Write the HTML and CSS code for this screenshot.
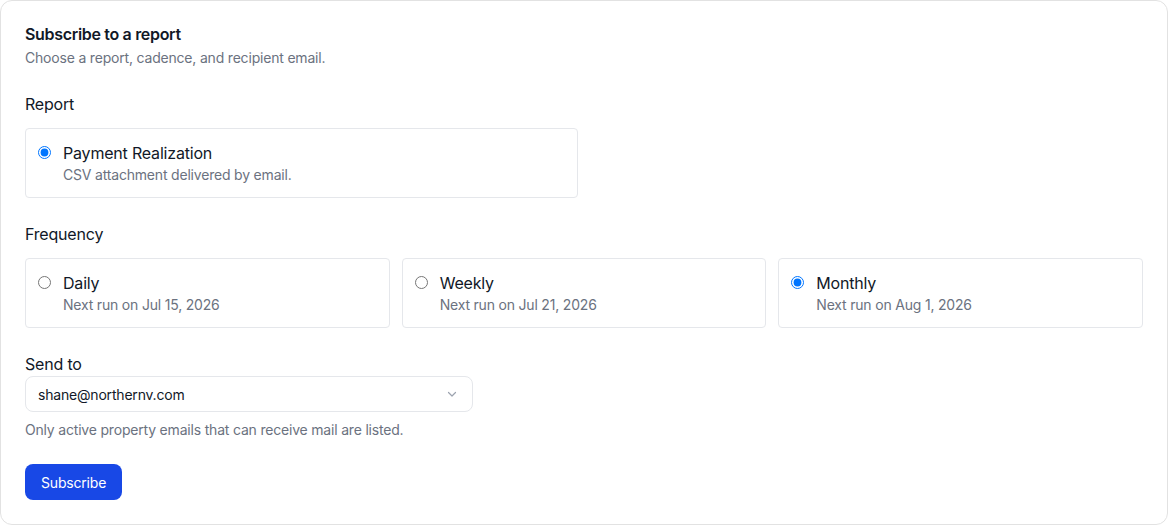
FILE: index.html
```html
<!DOCTYPE html>
<html lang="en">
<head>
  <meta charset="UTF-8">
  <meta name="viewport" content="width=device-width, initial-scale=1.0">
  <title>Subscribe to a report</title>
  <link rel="stylesheet" href="styles.css">
</head>
<body>
  <form class="panel">
    <div class="head">
      <h1>Subscribe to a report</h1>
      <p class="muted">Choose a report, cadence, and recipient email.</p>
    </div>

    <div class="field">
      <div class="label">Report</div>
      <div class="report-list">
        <label class="option">
          <input type="radio" name="report" checked>
          <span class="option-text">
            <span class="option-title">Payment Realization</span>
            <span class="option-sub">CSV attachment delivered by email.</span>
          </span>
        </label>
      </div>
    </div>

    <div class="field">
      <div class="label">Frequency</div>
      <div class="freq-grid">
        <label class="option">
          <input type="radio" name="freq">
          <span class="option-text">
            <span class="option-title">Daily</span>
            <span class="option-sub">Next run on Jul 15, 2026</span>
          </span>
        </label>
        <label class="option">
          <input type="radio" name="freq">
          <span class="option-text">
            <span class="option-title">Weekly</span>
            <span class="option-sub">Next run on Jul 21, 2026</span>
          </span>
        </label>
        <label class="option">
          <input type="radio" name="freq" checked>
          <span class="option-text">
            <span class="option-title">Monthly</span>
            <span class="option-sub">Next run on Aug 1, 2026</span>
          </span>
        </label>
      </div>
    </div>

    <div class="field tight">
      <div class="label">Send to</div>
      <div class="select">
        <span>shane@northernv.com</span>
        <svg width="12" height="12" viewBox="0 0 12 12" fill="none" stroke="#9ca3af" stroke-width="1.2" stroke-linecap="round" stroke-linejoin="round"><path d="M2.5 4.5 6 8l3.5-3.5"/></svg>
      </div>
      <p class="muted help">Only active property emails that can receive mail are listed.</p>
    </div>

    <button type="button" class="btn">Subscribe</button>
  </form>
</body>
</html>
```

FILE: styles.css
```css
:root {
  --border: #e5e7eb;
  --text: #111827;
  --muted: #6b7280;
  --primary: #1848e6;
}
* { box-sizing: border-box; }
body {
  margin: 0;
  background: #fff;
  color: var(--text);
  font-family: Inter, 'Noto Sans', sans-serif;
  letter-spacing: -0.012em;
}
.panel {
  border: 1px solid #e2e2e2;
  border-radius: 12px;
  padding: 21px 24px 24px;
  display: flex;
  flex-direction: column;
  align-items: flex-start;
  gap: 24px;
}
.head, .field { width: 100%; }
h1 {
  margin: 0;
  font-size: 16px;
  line-height: 24px;
  font-weight: 600;
  letter-spacing: -0.02em;
}
.muted {
  margin: 0;
  color: var(--muted);
  font-size: 14px;
  line-height: 20px;
}
.head .muted { margin-top: 2px; }
.label {
  font-size: 16px;
  line-height: 24px;
  font-weight: 400;
  margin-bottom: 12px;
}
.field.tight .label { margin-bottom: 0; }
.report-list { width: 553px; }
.freq-grid {
  display: grid;
  grid-template-columns: repeat(3, 1fr);
  gap: 12px;
}
.option {
  display: flex;
  align-items: flex-start;
  gap: 12px;
  border: 1px solid var(--border);
  border-radius: 4px;
  padding: 12px;
  cursor: pointer;
}
.option input {
  margin: 5px 0 0;
  width: 13px;
  height: 13px;
  flex: none;
}
.option-text {
  display: flex;
  flex-direction: column;
}
.option-title {
  font-size: 16px;
  line-height: 24px;
  font-weight: 400;
}
.option-sub {
  font-size: 14px;
  line-height: 20px;
  color: var(--muted);
}
.select {
  width: 448px;
  height: 36px;
  border: 1px solid var(--border);
  border-radius: 8px;
  padding: 0 14px 0 12px;
  display: flex;
  align-items: center;
  justify-content: space-between;
  font-size: 14px;
}
.help { margin-top: 8px; }
.btn {
  height: 36px;
  padding: 0 16px;
  border: none;
  border-radius: 8px;
  background: var(--primary);
  color: #fff;
  font-family: inherit;
  font-size: 14px;
  font-weight: 400;
  letter-spacing: inherit;
  cursor: pointer;
}
```
